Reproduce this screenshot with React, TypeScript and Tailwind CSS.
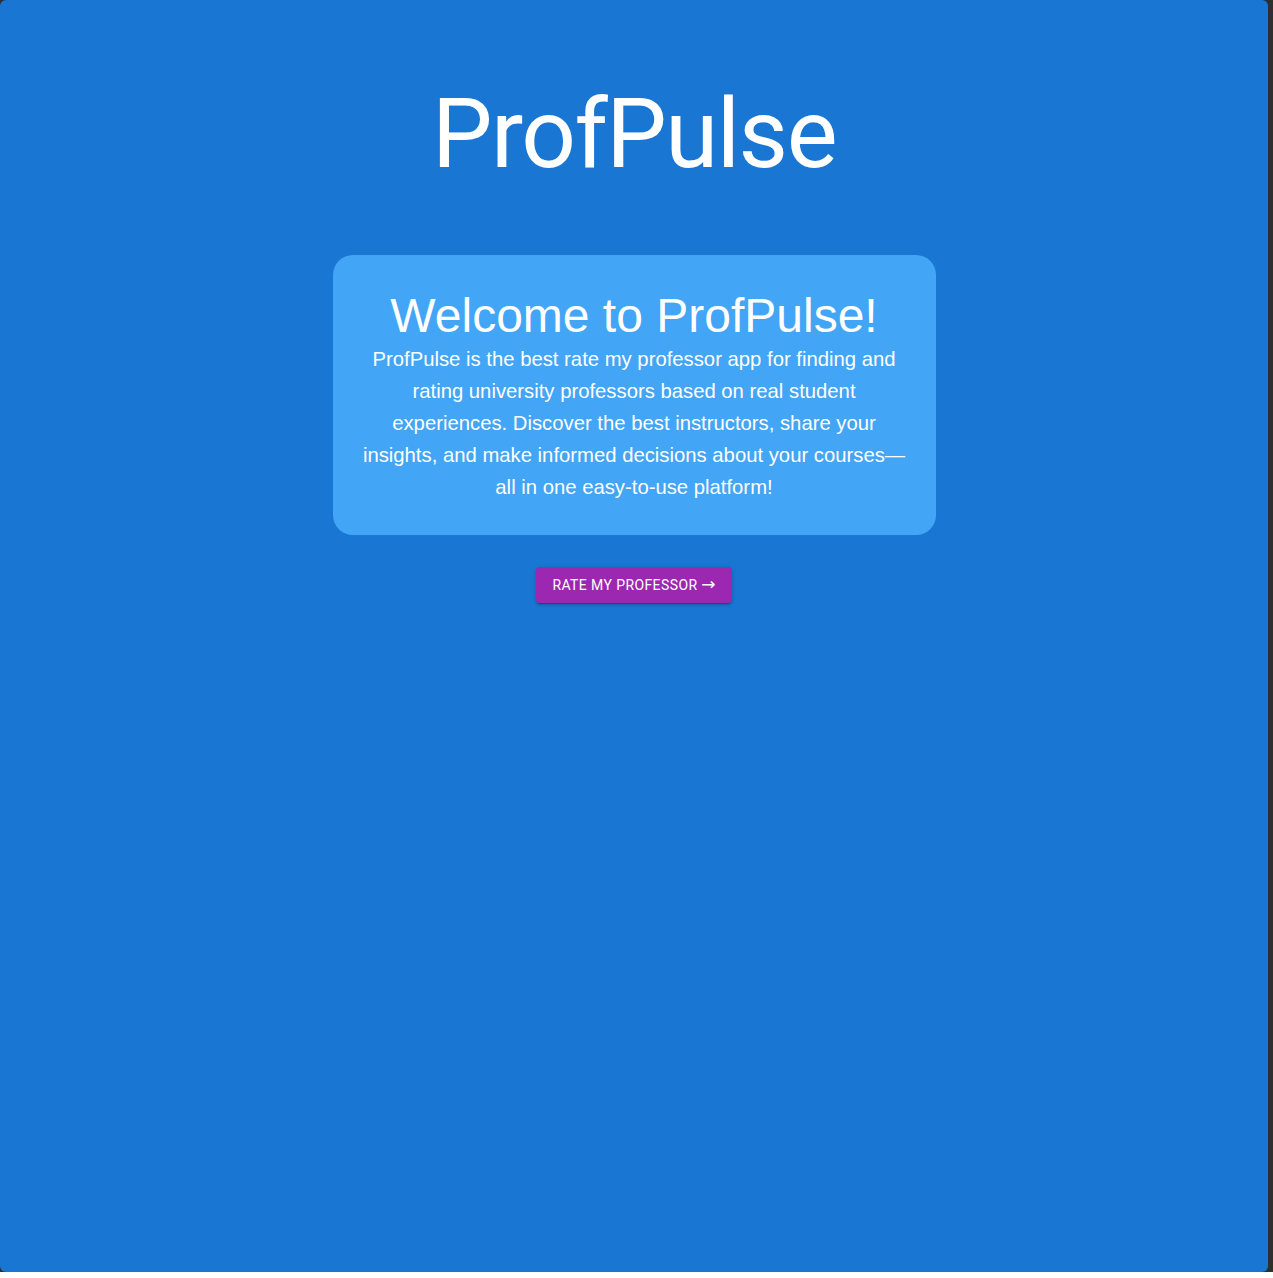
export default function App() {
  return (
    <div className="h-[1278px] w-[1273px] bg-white">
      <div className="flex h-[1272px] bg-[#2f2f2f]">
        <main className="flex w-[1268px] flex-col items-center rounded-md bg-[#1976d2] pt-[78px] font-['Liberation_Sans',Arial,sans-serif] text-white">
          <h1 className="font-['Roboto',sans-serif] text-[96px] font-normal leading-[1.167] tracking-[-1.5px]">
            ProfPulse
          </h1>

          <section className="mt-[65px] w-[603px] rounded-[20px] bg-[#42a5f5] px-[29px] pb-8 pt-[33px] text-center">
            <h2 className="text-[48px] leading-[1.15]">Welcome to ProfPulse!</h2>
            <p className="text-[20.3px] leading-[32px]">
              ProfPulse is the best rate my professor app for finding and rating university professors based on real
              student experiences. Discover the best instructors, share your insights, and make informed decisions
              about your courses—all in one easy-to-use platform!
            </p>
          </section>

          <button className="mt-8 h-9 rounded bg-[#9c27b0] px-4 font-['Roboto',sans-serif] text-[14px] font-normal uppercase tracking-[0.4px] text-white shadow-[0_3px_1px_-2px_rgba(0,0,0,0.2),0_2px_2px_0_rgba(0,0,0,0.14),0_1px_5px_0_rgba(0,0,0,0.12)]">
            Rate my professor <span className="font-['DejaVu_Sans',sans-serif] text-[17px] leading-none tracking-normal">→</span>
          </button>
        </main>
      </div>
    </div>
  );
}
